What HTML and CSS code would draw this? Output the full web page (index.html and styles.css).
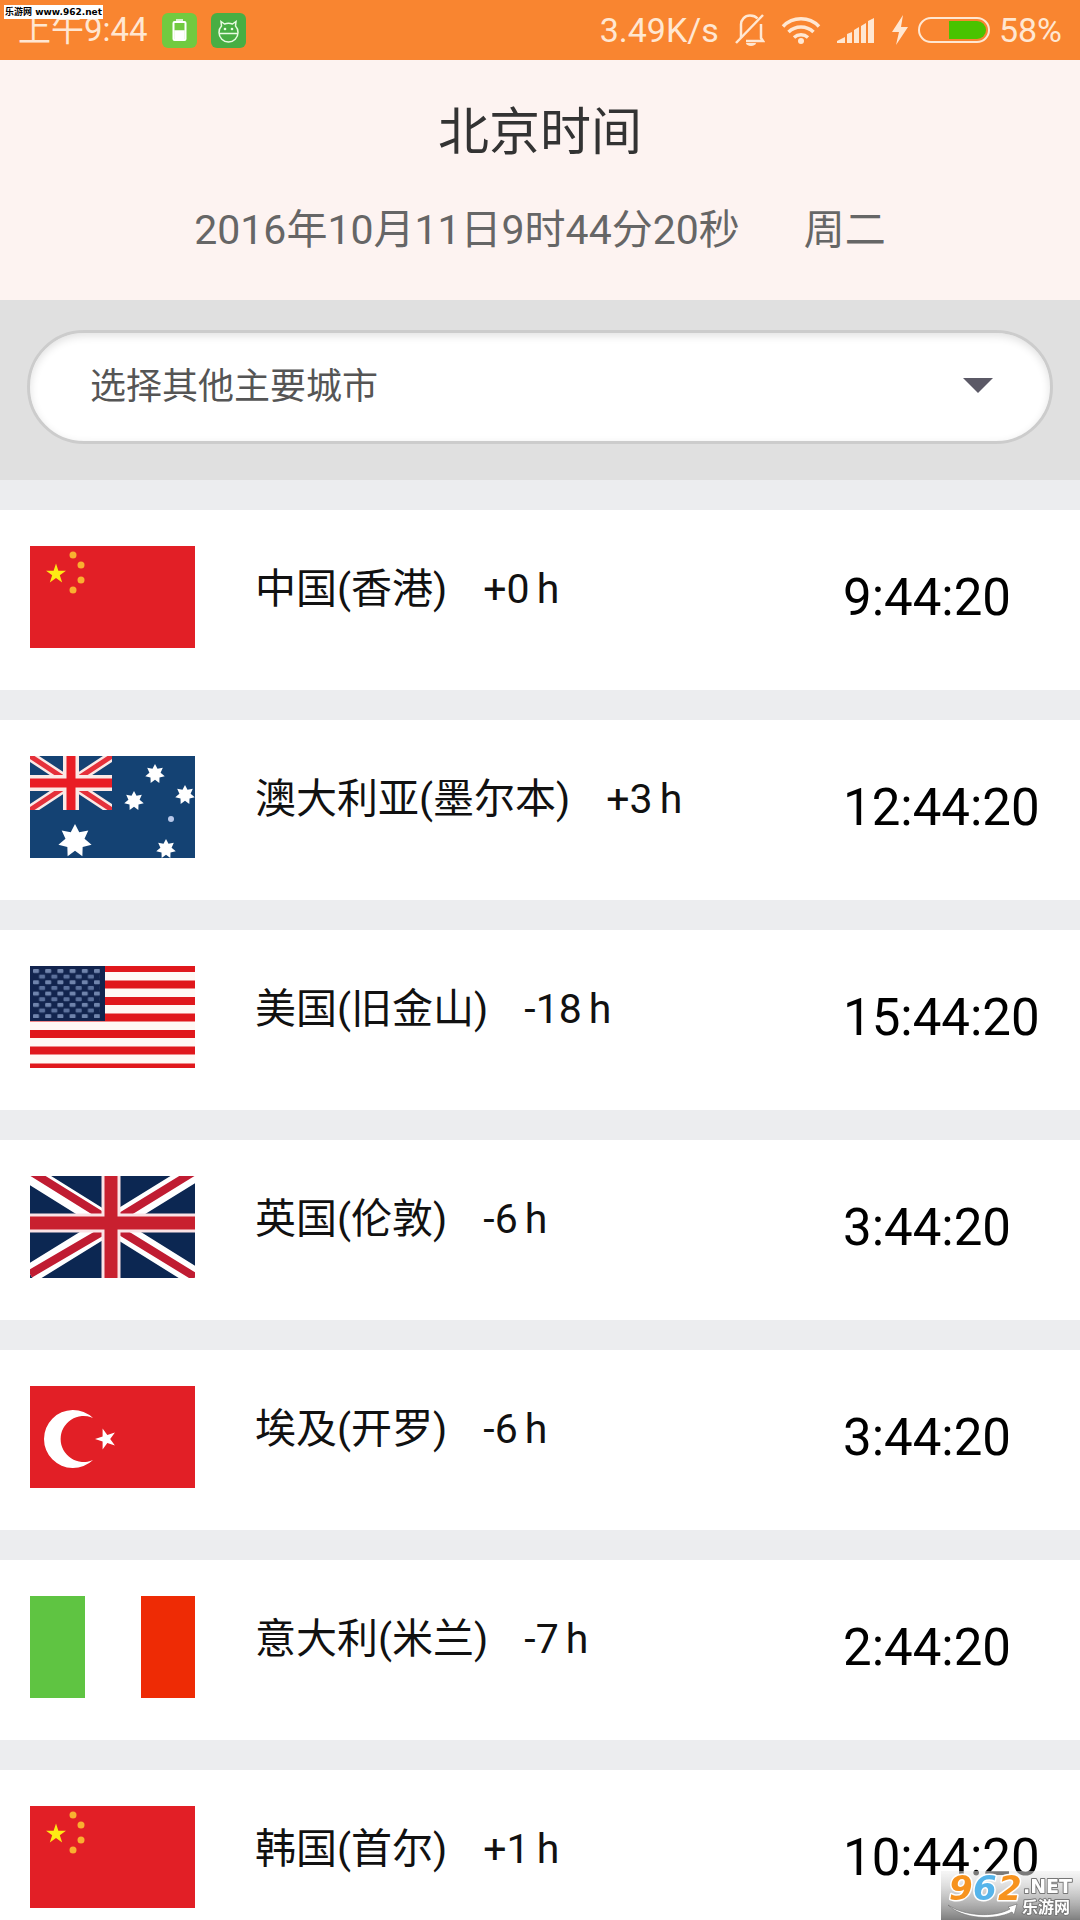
FILE: index.html
```
<!DOCTYPE html>
<html lang="zh-Hans">

<head>
    <meta charset="UTF-8">
    <meta name="viewport" content="width=device-width, initial-scale=1.0">
    <title>北京时间</title>
    <link rel="stylesheet" href="styles.css">
</head>

<body>
    <!-- shared shapes -->
    <svg class="shapes" aria-hidden="true">
        <defs>
            <polygon id="star5" points="0,-1 .225,-.309 .951,-.309 .363,.118 .588,.809 0,.382 -.588,.809 -.363,.118 -.951,-.309 -.225,-.309" />
            <polygon id="star7" points="0,-1 .25,-.52 .782,-.623 .56,-.128 .975,.223 .45,.36 .434,.901 0,.57 -.434,.901 -.45,.36 -.975,.223 -.56,-.128 -.782,-.623 -.25,-.52" />
            <pattern id="starField" x="3" y="3" width="12.2" height="11.3" patternUnits="userSpaceOnUse">
                <rect width="6" height="4" rx="1" fill="#7084ac" />
                <rect x="6.1" y="5.6" width="6" height="4" rx="1" fill="#5c719c" />
            </pattern>
            <symbol id="flag-china" viewBox="0 0 165 102">
                <rect width="165" height="102" fill="#e21f26" />
                <use href="#star5" transform="translate(26 28) scale(10.5)" fill="#fdea14" />
                <g fill="#f9b030">
                    <circle cx="43" cy="9" r="3.5" />
                    <circle cx="51" cy="19" r="3.5" />
                    <circle cx="51" cy="34" r="3.5" />
                    <circle cx="43" cy="44" r="3.5" />
                </g>
            </symbol>
        </defs>
    </svg>

    <div class="status-bar">
        <span class="clock">上午9:44</span>
        <svg class="app-icon" width="35" height="35" viewBox="0 0 35 35">
            <rect width="35" height="35" rx="6" fill="#71ca40" />
            <rect x="11.5" y="9" width="12" height="18" rx="1" fill="none" stroke="#fff" stroke-width="2" />
            <path d="M14 7h7M13 18h9v8h-9z" fill="#fff" stroke="#fff" stroke-width="1.5" />
        </svg>
        <svg class="app-icon" width="35" height="35" viewBox="0 0 35 35">
            <rect width="35" height="35" rx="6" fill="#48ae43" />
            <path d="M8 19.500a9.500 9.500 0 0 0 19 0c0-3-1-5-2.500-6.500l.5-4.500-3.500 2.500q-4-1.500-8 0L10 8.500l.5 4.500C9 14.500 8 16.500 8 19.500zM8 20.500h19" fill="none" stroke="#e8fbe2" stroke-width="1.500" />
            <circle cx="14" cy="16" r="1.300" fill="#e8fbe2" />
            <circle cx="21" cy="16" r="1.300" fill="#e8fbe2" />
        </svg>

        <div class="status-right">
            <span class="speed">3.49K/s</span>
            <svg width="30" height="34" viewBox="0 0 30 34">
                <path d="M6 25V12a9 9 0 0 1 9-9.500c3.500 0 6 1.200 7.500 3M26 11v14l2 3H11" fill="none" stroke="#ffe7d2" stroke-width="2.500" />
                <path d="M1 30L28 2" stroke="#ffe7d2" stroke-width="2.500" />
                <path d="M11 30h10a5 3 0 0 1-10 0z" fill="#ffe7d2" />
            </svg>
            <svg width="40" height="30" viewBox="0 0 40 30">
                <path d="M2 11.500a25 25 0 0 1 36 0M7.500 17a18 18 0 0 1 25 0M13 22.500a10.500 10.500 0 0 1 14 0" fill="none" stroke="#ffe7d2" stroke-width="3.500" />
                <circle cx="20" cy="26" r="3" fill="#ffe7d2" />
            </svg>
            <svg width="38" height="26" viewBox="0 0 38 26">
                <path d="M0 26v-2l8-4v6zM10 26v-9l5-2v11zM17 26V13l5-3v16zM24 26V9l5-3v20zM31 26V4l6-3v25z" fill="#ffe7d2" />
            </svg>
            <div class="power">
                <svg width="18" height="30" viewBox="0 0 18 30">
                    <path d="M12 0L1 17h7L5 30 17 12h-7z" fill="#ffe7d2" />
                </svg>
                <svg width="72" height="26" viewBox="0 0 72 26">
                    <rect x="1" y="1" width="70" height="24" rx="12" fill="none" stroke="#ffe7d2" stroke-width="2" />
                    <path d="M31 4h28a9 9 0 0 1 0 18H31z" fill="#49c300" />
                </svg>
                <span>58%</span>
            </div>
        </div>
    </div>

    <header class="header">
        <h1>北京时间</h1>
        <p><span>2016年10月11日9时44分20秒</span><span>周二</span></p>
    </header>

    <div class="city-bar">
        <div class="city-select">
            <select id="city" aria-label="选择其他主要城市">
                <option>选择其他主要城市</option>
            </select>
        </div>
    </div>

    <ul class="city-list">
        <li class="city">
            <svg class="flag" viewBox="0 0 165 102"><use href="#flag-china" /></svg>
            <div class="name">中国(香港)<span class="offset">+0<span class="unit">h</span></span></div>
            <div class="time">9:44:20</div>
        </li>
        <li class="city">
            <svg class="flag" viewBox="0 0 165 102">
                <rect width="165" height="102" fill="#144273" />
                <svg width="82" height="54" viewBox="0 0 82 54">
                    <path d="M0 0l82 54M82 0L0 54" stroke="#fbe9e6" stroke-width="10" />
                    <path d="M0 0l82 54M82 0L0 54" stroke="#e5303a" stroke-width="5" />
                    <path d="M41 0v54M0 27h82" stroke="#fbe9e6" stroke-width="16" />
                    <path d="M41 0v54M0 27h82" stroke="#e91d25" stroke-width="9" />
                </svg>
                <g fill="#fff">
                    <use href="#star7" transform="translate(45 85) scale(17)" />
                    <use href="#star7" transform="translate(125 18) scale(10)" />
                    <use href="#star7" transform="translate(104 45) scale(10)" />
                    <use href="#star7" transform="translate(155 39) scale(10)" />
                    <use href="#star7" transform="translate(136 93) scale(10)" />
                </g>
                <circle cx="141" cy="63" r="3" fill="#b9c8ea" />
            </svg>
            <div class="name">澳大利亚(墨尔本)<span class="offset">+3<span class="unit">h</span></span></div>
            <div class="time">12:44:20</div>
        </li>
        <li class="city">
            <svg class="flag" viewBox="0 0 165 102">
                <rect width="165" height="102" fill="#fff8f4" />
                <path d="M0 2h165M0 18.500h165M0 35h165M0 51.500h165M0 68h165M0 84.500h165M0 101.500h165" stroke="#e0181c" stroke-width="8" />
                <rect width="75" height="55" fill="#12244e" />
                <rect x="3" y="3" width="67" height="49" fill="url(#starField)" />
            </svg>
            <div class="name">美国(旧金山)<span class="offset">-18<span class="unit">h</span></span></div>
            <div class="time">15:44:20</div>
        </li>
        <li class="city">
            <svg class="flag" viewBox="0 0 165 102">
                <rect width="165" height="102" fill="#0c2752" />
                <path d="M0-2l165 103M165-4L0 98" stroke="#fff" stroke-width="19" />
                <path d="M0-5l82 51M165-5L82 46M82 50l83 51M82 50L0 98" stroke="#c01c32" stroke-width="8" />
                <path d="M81 0v102M0 47h165" stroke="#fbe3e6" stroke-width="19" />
                <path d="M81 0v102M0 47h165" stroke="#c8202f" stroke-width="13" />
            </svg>
            <div class="name">英国(伦敦)<span class="offset">-6<span class="unit">h</span></span></div>
            <div class="time">3:44:20</div>
        </li>
        <li class="city">
            <svg class="flag" viewBox="0 0 165 102">
                <rect width="165" height="102" fill="#e21f26" />
                <path d="M63 32a29 29 0 1 0 0 42a23 23 0 1 1 0-42z" fill="#fff" />
                <use href="#star5" transform="translate(76 53) rotate(-90) scale(11)" fill="#fff" />
            </svg>
            <div class="name">埃及(开罗)<span class="offset">-6<span class="unit">h</span></span></div>
            <div class="time">3:44:20</div>
        </li>
        <li class="city">
            <svg class="flag" viewBox="0 0 165 102">
                <rect width="165" height="102" fill="#fff" />
                <rect width="55" height="102" fill="#5fc442" />
                <rect x="111" width="54" height="102" fill="#ee2b05" />
            </svg>
            <div class="name">意大利(米兰)<span class="offset">-7<span class="unit">h</span></span></div>
            <div class="time">2:44:20</div>
        </li>
        <li class="city">
            <svg class="flag" viewBox="0 0 165 102"><use href="#flag-china" /></svg>
            <div class="name">韩国(首尔)<span class="offset">+1<span class="unit">h</span></span></div>
            <div class="time">10:44:20</div>
        </li>
    </ul>

    <!-- site marks -->
    <div class="site-tag">乐游网 www.962.net</div>
    <svg class="site-logo" width="139" height="49" viewBox="0 0 139 49">
        <defs>
            <linearGradient id="logoShade" x1="0" y1="0" x2="0" y2="1">
                <stop offset="0" stop-color="#eee" stop-opacity=".5" />
                <stop offset="1" stop-color="#777" stop-opacity=".95" />
            </linearGradient>
        </defs>
        <rect width="139" height="49" fill="url(#logoShade)" />
        <path d="M7 34c16 11 46 13 62 4l-2-2 9-3-3 11-2-3C53 50 21 48 7 34z" fill="#fff" stroke="#777" stroke-width=".7" />
        <g class="logo-number">
            <text x="8" y="29" fill="#f7931e">9</text>
            <text x="32" y="29" fill="#56b4ea">6</text>
            <text x="57" y="29" fill="#f7931e">2</text>
        </g>
        <text class="logo-net" x="82" y="22">.NET</text>
        <text class="logo-name" x="81" y="42">乐游网</text>
    </svg>
</body>

</html>
```
FILE: styles.css
```
* {
    box-sizing: border-box;
}

body {
    margin: 0;
    font-family: Roboto, "Noto Sans CJK SC", sans-serif;
    font-size: 41px;
    color: #111;
    background-color: #ecedef;
}

.shapes {
    position: absolute;
    width: 0;
    height: 0;
}

.status-bar {
    display: flex;
    align-items: center;
    height: 60px;
    padding: 0 18px;
    font-size: 34px;
    line-height: 62px;
    color: #ffe7d2;
    background-color: #f98530;
}

.clock {
    font-size: 33px;
}

.status-bar .app-icon {
    margin-left: 14px;
}

.status-right {
    display: flex;
    align-items: center;
    gap: 16px;
    margin-left: auto;
}

.power {
    display: flex;
    align-items: center;
    gap: 9px;
}

.header {
    height: 240px;
    padding-top: 32px;
    text-align: center;
    background-color: #fdf3f1;
}

.header h1 {
    margin: 0;
    font-size: 51px;
    font-weight: 400;
    line-height: 82px;
    color: #333;
}

.header p {
    display: flex;
    justify-content: center;
    gap: 64px;
    margin: 26px 0 0;
    line-height: 60px;
    color: #666;
}

.city-bar {
    padding: 30px 27px 36px;
    background-color: #e0e0e0;
}

.city-select {
    position: relative;
}

.city-select::after {
    content: "";
    position: absolute;
    top: 48px;
    right: 60px;
    border: 15px solid transparent;
    border-top-color: #5b5966;
    border-bottom: 0;
    pointer-events: none;
}

.city-select select {
    display: block;
    width: 100%;
    height: 114px;
    padding: 0 60px;
    font-family: inherit;
    font-size: 36px;
    color: #555;
    background-color: #fff;
    border: 3px solid #ccc;
    border-radius: 57px;
    box-shadow: inset 0 3px 8px rgba(0, 0, 0, 0.12);
    appearance: none;
}

.city-list {
    display: flex;
    flex-direction: column;
    gap: 30px;
    margin: 30px 0 0;
    padding: 0;
    list-style: none;
}

.city {
    display: flex;
    height: 180px;
    padding: 36px 0 36px 30px;
    background-color: #fff;
}

.flag {
    flex: none;
    width: 165px;
    height: 102px;
}

.name {
    flex: 1;
    margin-left: 60px;
    line-height: 86px;
}

.offset {
    margin-left: 36px;
}

.unit {
    margin-left: 7px;
}

.time {
    width: 237px;
    font-size: 51px;
    line-height: 104px;
    color: #000;
}

.site-tag {
    position: absolute;
    top: 5px;
    left: 4px;
    height: 14px;
    padding: 0 1px;
    font: bold 9px/14px "DejaVu Sans", "Noto Sans CJK SC", sans-serif;
    color: #000;
    background-color: #fff;
}

.site-logo {
    position: fixed;
    right: 0;
    bottom: 0;
}

.site-logo text {
    paint-order: stroke;
    stroke-linejoin: round;
}

.logo-number {
    font: italic bold 34px "DejaVu Sans", sans-serif;
    stroke: #fff;
    stroke-width: 3px;
}

.logo-net {
    font: bold 19px "DejaVu Sans", sans-serif;
    fill: #fff;
    stroke: #777;
    stroke-width: 2px;
}

.logo-name {
    font: bold 16px "Noto Sans CJK SC", sans-serif;
    fill: #fff;
    stroke: #777;
    stroke-width: 2px;
}
```
